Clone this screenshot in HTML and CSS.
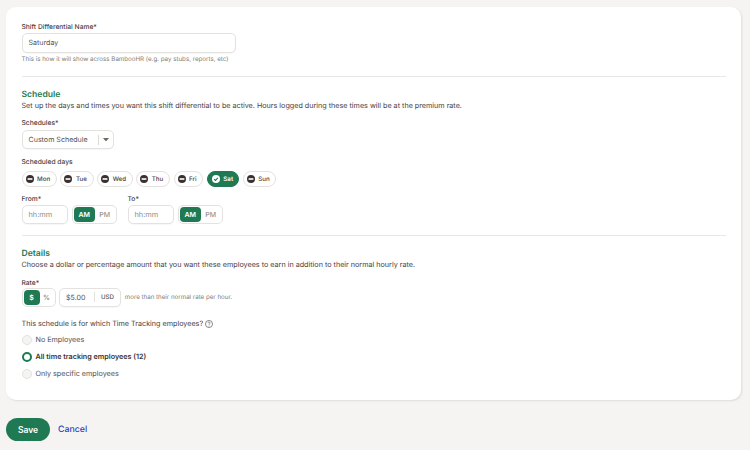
FILE: index.html
```html
<!DOCTYPE html>
<html lang="en">
<head>
<meta charset="utf-8">
<title>Shift Differential</title>
<link rel="stylesheet" href="styles.css">
</head>
<body>
<main class="card">
  <section class="name-block">
    <label class="label">Shift Differential Name*</label>
    <div class="field name-field">Saturday</div>
    <p class="hint">This is how it will show across BambooHR (e.g. pay stubs, reports, etc)</p>
  </section>
  <hr class="rule first-rule">
  <section class="schedule">
    <h2 class="heading">Schedule</h2>
    <p class="desc">Set up the days and times you want this shift differential to be active. Hours logged during these times will be at the premium rate.</p>
    <label class="label schedules-label">Schedules*</label>
    <div class="field select">
      <span class="select-text">Custom Schedule</span>
      <span class="select-btn"><svg width="6" height="3.5" viewBox="0 0 7 4"><path d="M0 0h7L3.5 4z" fill="#6b6a66"/></svg></span>
    </div>
    <label class="label days-label">Scheduled days</label>
    <div class="days">
      <span class="pill"><svg class="pill-icon" viewBox="0 0 10 10"><circle cx="5" cy="5" r="5" fill="#38312f"/><rect x="2" y="4" width="6" height="2" fill="#fff"/></svg><span class="pill-text">Mon</span></span>
      <span class="pill"><svg class="pill-icon" viewBox="0 0 10 10"><circle cx="5" cy="5" r="5" fill="#38312f"/><rect x="2" y="4" width="6" height="2" fill="#fff"/></svg><span class="pill-text">Tue</span></span>
      <span class="pill"><svg class="pill-icon" viewBox="0 0 10 10"><circle cx="5" cy="5" r="5" fill="#38312f"/><rect x="2" y="4" width="6" height="2" fill="#fff"/></svg><span class="pill-text">Wed</span></span>
      <span class="pill"><svg class="pill-icon" viewBox="0 0 10 10"><circle cx="5" cy="5" r="5" fill="#38312f"/><rect x="2" y="4" width="6" height="2" fill="#fff"/></svg><span class="pill-text">Thu</span></span>
      <span class="pill"><svg class="pill-icon" viewBox="0 0 10 10"><circle cx="5" cy="5" r="5" fill="#38312f"/><rect x="2" y="4" width="6" height="2" fill="#fff"/></svg><span class="pill-text">Fri</span></span>
      <span class="pill pill-on"><svg class="pill-icon" viewBox="0 0 10 10"><circle cx="5" cy="5" r="5" fill="#fff"/><path d="M2.7 5.2l1.6 1.6 3-3.2" fill="none" stroke="#1f7a54" stroke-width="1.4"/></svg><span class="pill-text">Sat</span></span>
      <span class="pill"><svg class="pill-icon" viewBox="0 0 10 10"><circle cx="5" cy="5" r="5" fill="#38312f"/><rect x="2" y="4" width="6" height="2" fill="#fff"/></svg><span class="pill-text">Sun</span></span>
    </div>
    <div class="times">
      <div class="time">
        <label class="label">From*</label>
        <div class="time-row">
          <div class="field time-input">hh:mm</div>
          <div class="toggle ampm"><span class="opt opt-on">AM</span><span class="opt">PM</span></div>
        </div>
      </div>
      <div class="time">
        <label class="label">To*</label>
        <div class="time-row">
          <div class="field time-input">hh:mm</div>
          <div class="toggle ampm"><span class="opt opt-on">AM</span><span class="opt">PM</span></div>
        </div>
      </div>
    </div>
  </section>
  <hr class="rule second-rule">
  <section class="details">
    <h2 class="heading">Details</h2>
    <p class="desc">Choose a dollar or percentage amount that you want these employees to earn in addition to their normal hourly rate.</p>
    <label class="label rate-label">Rate*</label>
    <div class="rate-row">
      <div class="toggle unit"><span class="opt opt-on">$</span><span class="opt">%</span></div>
      <div class="field amount"><span class="amount-val">$5.00</span><span class="amount-cur">USD</span></div>
      <span class="rate-note">more than their normal rate per hour.</span>
    </div>
    <p class="question">This schedule is for which Time Tracking employees?
      <svg class="help" width="8" height="8" viewBox="0 0 18 18"><circle cx="9" cy="9" r="8" fill="none" stroke="#55524f" stroke-width="1.5"/><path d="M6.6 7a2.4 2.4 0 1 1 3.6 2.1c-.8.5-1.2.9-1.2 1.8" fill="none" stroke="#55524f" stroke-width="1.5"/><circle cx="9" cy="13.4" r="1" fill="#55524f"/></svg>
    </p>
    <div class="radios">
      <div class="radio-row"><span class="radio"></span>No Employees</div>
      <div class="radio-row radio-row-on"><span class="radio radio-on"></span>All time tracking employees (12)</div>
      <div class="radio-row"><span class="radio"></span>Only specific employees</div>
    </div>
  </section>
</main>
<footer class="actions">
  <button class="save">Save</button>
  <a class="cancel" href="#">Cancel</a>
</footer>
</body>
</html>
```

FILE: styles.css
```css
* { box-sizing: border-box; }
html, body { height: 100%; }
body {
  margin: 0;
  padding: 6.7px 9.3px 0 6px;
  background: #f5f4f2;
  font-family: Inter, "Liberation Sans", sans-serif;
  color: #38312f;
  overflow: hidden;
  text-rendering: geometricPrecision;
}
.card {
  height: 393.5px;
  background: #fff;
  border-radius: 10px;
  box-shadow: 1px 1px 2px rgba(56, 49, 47, 0.12);
  padding: 15px 15px 0 15.5px;
}
.label {
  display: block;
  font-size: 6.7px;
  line-height: 10px;
  font-weight: 500;
  color: #48413f;
}
.field {
  height: 19.5px;
  background: #fff;
  border: 1px solid #e4e2df;
  border-radius: 5px;
  box-shadow: 0 1px 1px rgba(56, 49, 47, 0.04);
  font-size: 7.1px;
  display: flex;
  align-items: center;
  color: #55524f;
}
.name-field { width: 214.5px; margin-top: 1.5px; padding-left: 6px; }
.hint { margin: 2.5px 0 0; font-size: 6.2px; line-height: 10px; color: #807c78; }
.rule { border: 0; height: 1px; background: #e9e8e5; margin: 0; }
.first-rule { margin-top: 10.5px; }
.second-rule { margin-top: 11px; }
.schedule { padding-top: 12px; }
.heading { margin: 0; font-size: 8.6px; line-height: 12.5px; font-weight: 600; color: #1f7a54; }
.desc { margin: 0; font-size: 7.2px; line-height: 10px; color: #48413f; }
.schedules-label { margin-top: 7px; }
.select { width: 92px; margin-top: 1.7px; padding-left: 6px; }
.select-text { flex: 0 0 69px; white-space: nowrap; }
.select-btn {
  flex: 0 0 15px; height: 10px;
  border-left: 1px solid #dcdad6;
  display: flex; align-items: center; justify-content: center;
}
.days-label { margin-top: 8.1px; }
.days { display: flex; gap: 3.6px; margin-top: 3.6px; }
.pill {
  height: 15.5px;
  padding: 0 5.7px 0 3px;
  border: 1px solid #e4e2df;
  border-radius: 8px;
  display: flex; align-items: center; gap: 3.5px;
  font-size: 6.2px; font-weight: 500; color: #48413f;
  background: #fff;
}
.pill-text { padding-top: 1px; }
.pill-on { background: #1f7a54; border-color: #1f7a54; color: #fff; font-weight: 600; padding: 0 5px 0 4px; }
.pill-icon { width: 8px; height: 8px; }
.times { display: flex; gap: 11px; margin-top: 7px; }
.time-row { display: flex; gap: 3.5px; margin-top: 1.2px; }
.time-input { width: 46.5px; padding-left: 6px; color: #8f8b87; font-size: 7.4px; }
.toggle {
  height: 19.5px;
  border: 1px solid #e4e2df;
  border-radius: 5px;
  padding: 1px;
  display: flex;
  background: #fff;
  font-size: 7px;
}
.opt { display: flex; align-items: center; justify-content: center; color: #807c78; border-radius: 4px; }
.opt-on { background: #1f7a54; color: #fff; font-weight: 600; }
.ampm { width: 45px; }
.ampm .opt { flex: 1 1 0; }
.ampm .opt-on { flex: 0 0 21.5px; }
.details { padding-top: 11.5px; }
.rate-label { margin-top: 7.3px; }
.rate-row { display: flex; align-items: center; gap: 3.5px; margin-top: 0.2px; }
.unit { flex: 0 0 34px; height: 19px; }
.unit .opt { flex: 1 1 0; }
.unit .opt-on { flex: 0 0 16px; }
.amount { flex: 0 0 61.5px; height: 19px; padding-left: 6px; }
.amount-val { flex: 0 0 27.5px; }
.amount-cur { border-left: 1px solid #e4e2df; padding: 1.5px 0 0 6.5px; font-size: 6.2px; font-weight: 500; line-height: 9px; }
.rate-note { margin-left: 0.8px; font-size: 6.2px; color: #807c78; }
.question { margin: 11.8px 0 0; font-size: 7.2px; line-height: 10px; color: #48413f; display: flex; align-items: center; gap: 2px; }
.radios { display: flex; flex-direction: column; gap: 7px; margin-top: 6.2px; }
.radio-row { display: flex; align-items: center; gap: 4px; height: 10px; font-size: 7.2px; color: #55524f; }
.radio-row-on { font-weight: 600; color: #38312f; }
.radio { flex: 0 0 10px; height: 10px; border-radius: 50%; background: #f5f4f2; border: 1px solid #e4e2df; }
.radio-on { background: #fff; border: 2.4px solid #1f7a54; }
.actions { display: flex; align-items: center; gap: 8px; margin-top: 18px; }
.save {
  width: 44px; height: 23px;
  border: 0; border-radius: 12px;
  background: #1f7a54; color: #fff;
  font: 600 8.5px Inter, "Liberation Sans", sans-serif;
  padding: 0;
}
.cancel { font-size: 8.8px; font-weight: 500; color: #2b44c4; text-decoration: none; }
```
